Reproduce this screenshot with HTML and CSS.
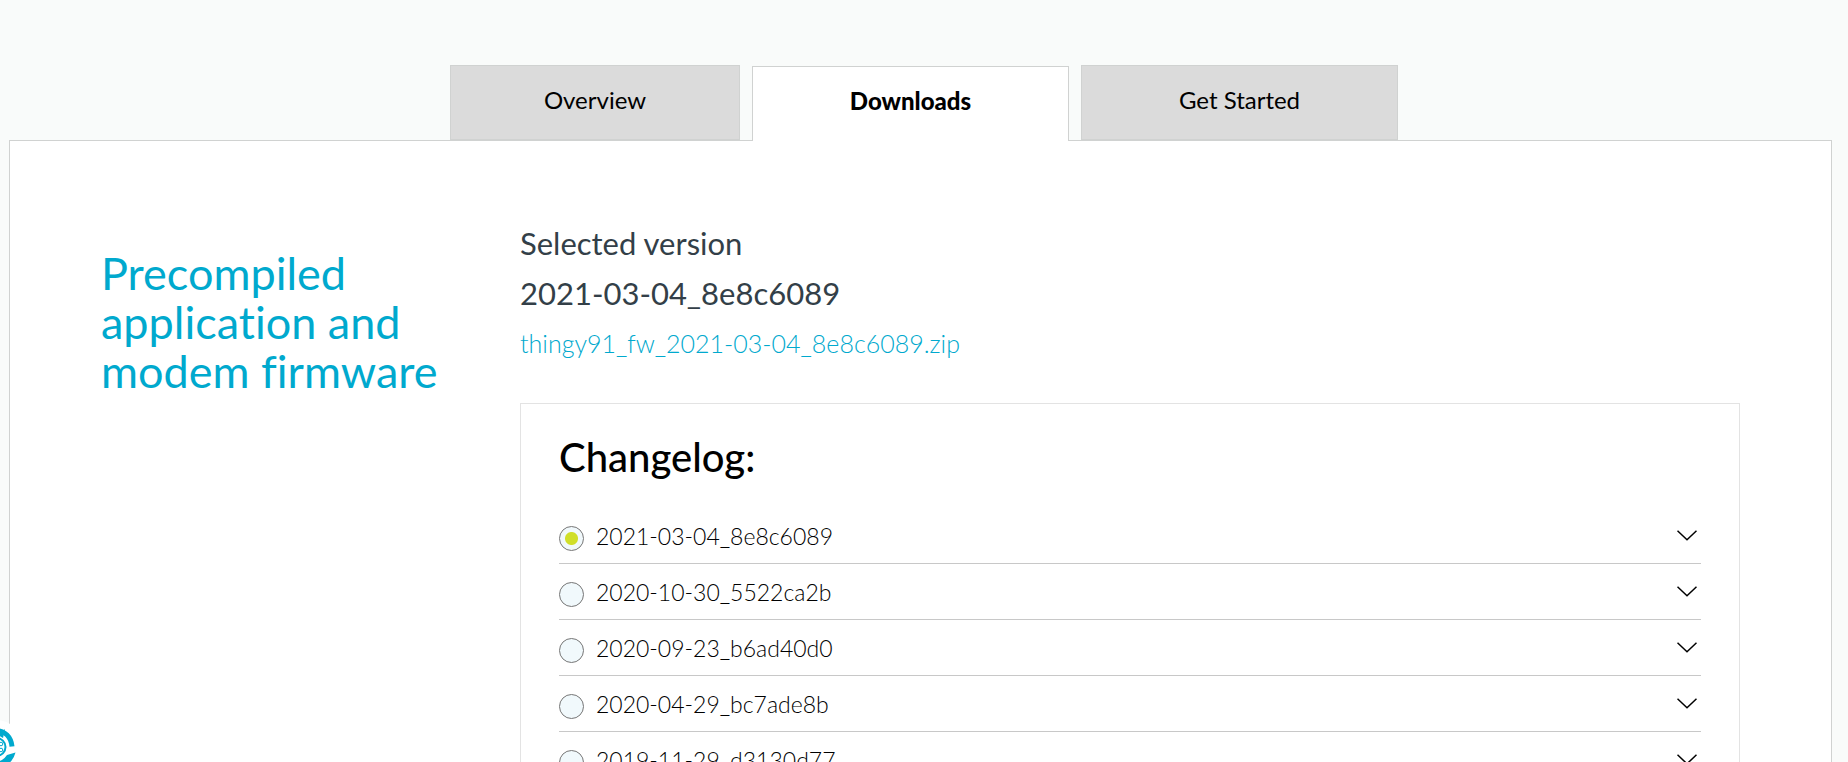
FILE: index.html
```html
<!DOCTYPE html>
<html lang="en">
<head>
<meta charset="utf-8">
<title>Downloads</title>
<link rel="stylesheet" href="styles.css">
</head>
<body>
<nav class="tabs" aria-label="Product sections">
  <a class="tab tab-narrow" href="#overview">Overview</a>
  <a class="tab tab-active" href="#downloads" aria-current="page">Downloads</a>
  <a class="tab" href="#get-started">Get Started</a>
</nav>
<main class="panel">
  <h1 class="title">Precompiled application and modem firmware</h1>
  <section class="content">
    <p class="selected">Selected version</p>
    <p class="selected">2021-03-04_8e8c6089</p>
    <a class="download" href="#zip">thingy91_fw_2021-03-04_8e8c6089.zip</a>
    <div class="changelog">
      <h2 class="changelog-title">Changelog:</h2>
      <ul class="versions">
        <li class="version"><input class="radio" type="radio" name="version" id="v1" checked><label class="label" for="v1">2021-03-04_8e8c6089</label><button class="expand" type="button" aria-label="Show changes"><svg class="chevron" viewBox="0 0 20 11"><path d="M0.500 0.800l9.500 9 9.500-9"/></svg></button></li>
        <li class="version"><input class="radio" type="radio" name="version" id="v2"><label class="label" for="v2">2020-10-30_5522ca2b</label><button class="expand" type="button" aria-label="Show changes"><svg class="chevron" viewBox="0 0 20 11"><path d="M0.500 0.800l9.500 9 9.500-9"/></svg></button></li>
        <li class="version"><input class="radio" type="radio" name="version" id="v3"><label class="label" for="v3">2020-09-23_b6ad40d0</label><button class="expand" type="button" aria-label="Show changes"><svg class="chevron" viewBox="0 0 20 11"><path d="M0.500 0.800l9.500 9 9.500-9"/></svg></button></li>
        <li class="version"><input class="radio" type="radio" name="version" id="v4"><label class="label" for="v4">2020-04-29_bc7ade8b</label><button class="expand" type="button" aria-label="Show changes"><svg class="chevron" viewBox="0 0 20 11"><path d="M0.500 0.800l9.500 9 9.500-9"/></svg></button></li>
        <li class="version"><input class="radio" type="radio" name="version" id="v5"><label class="label" for="v5">2019-11-29_d3130d77</label><button class="expand" type="button" aria-label="Show changes"><svg class="chevron" viewBox="0 0 20 11"><path d="M0.500 0.800l9.500 9 9.500-9"/></svg></button></li>
      </ul>
    </div>
  </section>
</main>
<button class="cookie" type="button" aria-label="Cookie settings">
  <svg class="cookie-icon" viewBox="0 0 60 60">
    <circle cx="30" cy="30" r="27" fill="#fff"/>
    <path d="M30 13.500C39 14 45 20 46 29.500" fill="none" stroke="#00a9ce" stroke-width="5"/>
    <path d="M32 18l7-6-2 9z" fill="#00a9ce"/>
    <path d="M49.500 35.500Q47 45 38 50L30 50V45Q37 44 41 38z" fill="#00a9ce"/>
    <circle cx="30.500" cy="30" r="9" fill="none" stroke="#00a9ce" stroke-width="2"/>
    <circle cx="35" cy="27" r="1.800" fill="none" stroke="#00a9ce"/><circle cx="35" cy="33" r="1.800" fill="none" stroke="#00a9ce"/>
  </svg>
</button>
</body>
</html>
```
FILE: styles.css
```css
* { box-sizing: border-box; }
html { overflow: hidden; }
body {
  margin: 0;
  background: #f9fbfa;
  color: #000;
  font-family: Lato, "Open Sans", sans-serif;
  font-variant-ligatures: none;
}
.tabs {
  display: flex;
  justify-content: center;
  align-items: flex-end;
  gap: 12px;
  padding-top: 65px;
}
.tab {
  width: 317px;
  height: 75px;
  padding-top: 19px;
  background: #dbdbdb;
  border: 1px solid #d0d2d1;
  color: #000;
  font-size: 24px;
  line-height: 30px;
  text-align: center;
  text-decoration: none;
}
.tab-narrow { width: 290px; }
.tab-active {
  position: relative;
  margin-bottom: -1px;
  background: #fff;
  border-bottom: 0;
  font-weight: 900;
}
.panel {
  display: grid;
  grid-template-columns: 379px 1fr;
  column-gap: 40px;
  align-items: start;
  margin: 0 16px 0 9px;
  padding: 77px 91px 80px;
  background: #fff;
  border: 1px solid #d0d2d1;
}
.title {
  margin: 31px 0 0;
  color: #00a9ce;
  font-size: 45px;
  font-weight: 400;
  line-height: 49px;
}
.selected {
  margin: 0;
  color: #333f48;
  font-size: 31px;
  line-height: 50px;
}
.download {
  display: block;
  color: #00a9ce;
  font-size: 25px;
  font-weight: 300;
  line-height: 50px;
  text-decoration: none;
}
.changelog {
  margin-top: 35px;
  padding: 29px 38px;
  border: 1px solid #e3e3e3;
}
.changelog-title {
  margin: 0;
  font-size: 40px;
  font-weight: 500;
  line-height: 48px;
}
.versions {
  margin: 27px 0 0;
  padding: 0;
  list-style: none;
}
.version {
  display: flex;
  align-items: center;
  gap: 12px;
  height: 56px;
  border-bottom: 1px solid #c8c8c8;
}
.radio {
  appearance: none;
  width: 25px;
  height: 25px;
  margin: 6px 0 0;
  background: #f1f9fc;
  border: 1px solid #767676;
  border-radius: 50%;
}
.radio:checked {
  background: radial-gradient(circle, #d0df2a 6px, #f1f9fc 7px);
}
.label {
  flex: 1;
  font-size: 23px;
  font-weight: 300;
  line-height: 30px;
}
.expand {
  display: flex;
  padding: 0 4px 0 0;
  background: none;
  border: 0;
}
.chevron {
  width: 20px;
  height: 11px;
  fill: none;
  stroke: #000;
  stroke-width: 1.5;
}
.cookie {
  position: fixed;
  left: -34px;
  bottom: -15px;
  padding: 0;
  background: none;
  border: 0;
}
.cookie-icon {
  display: block;
  width: 60px;
  height: 60px;
}
```
